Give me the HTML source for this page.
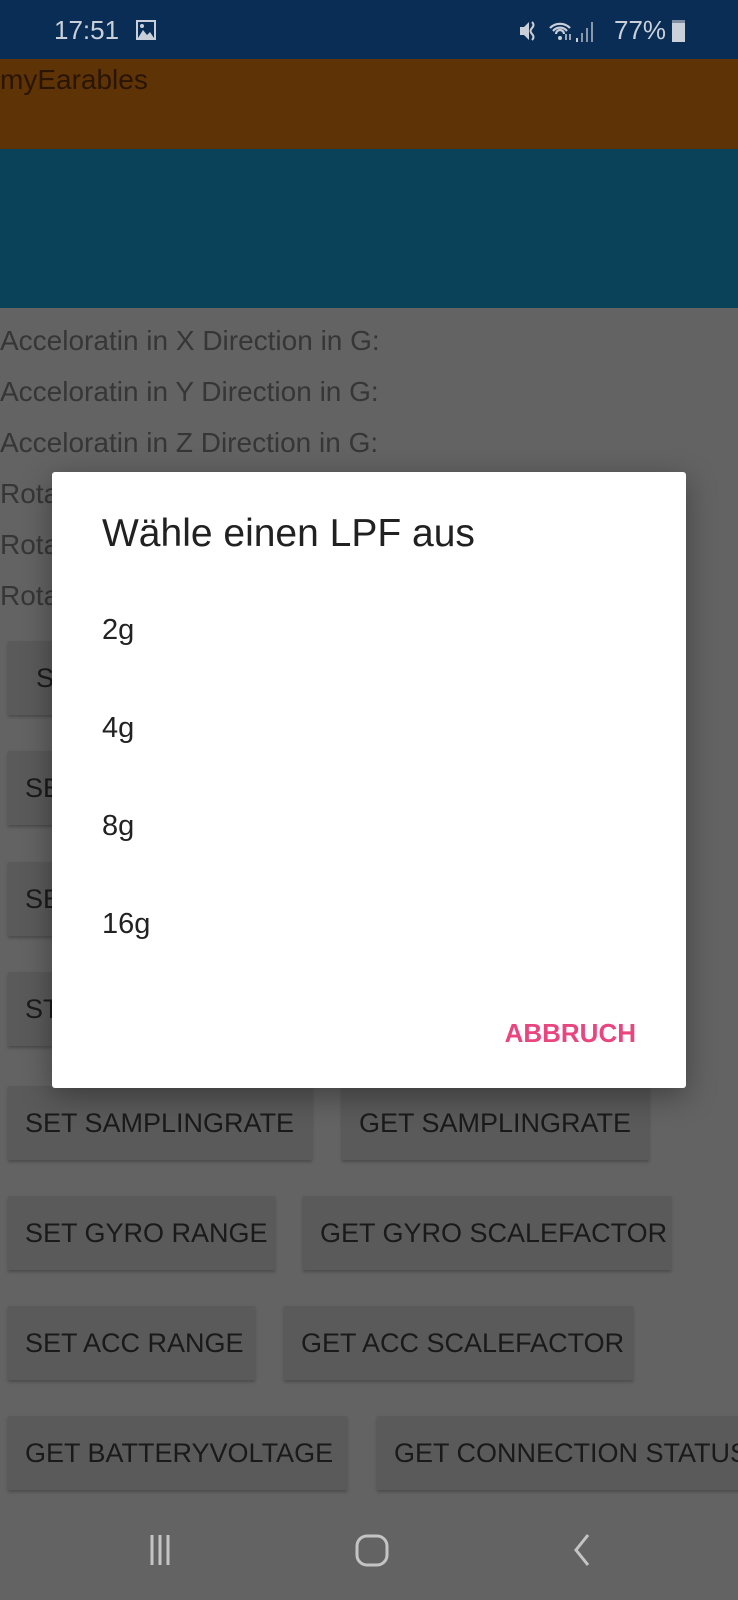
<!DOCTYPE html>
<html><head><meta charset="utf-8"><style>
*{margin:0;padding:0;box-sizing:border-box}
body{width:738px;height:1600px;overflow:hidden;background:#636363;font-family:"Liberation Sans",Roboto,sans-serif;position:relative}
.a{position:absolute}
.sb{left:0;top:0;width:738px;height:59px;background:#0a2d55;color:#c9d0da}
.t{font-size:25px;white-space:nowrap}
.lbl{left:0;color:#363636;font-size:28px}
.btn{position:absolute;height:74px;background:#5a5a5a;box-shadow:0 2px 3px rgba(0,0,0,.25);color:#1a1a1a;font-size:27px;line-height:74px;padding-left:17px;white-space:nowrap;overflow:hidden}
.dlg{left:52px;top:472px;width:634px;height:616px;background:#fff;border-radius:3px;box-shadow:0 8px 30px rgba(0,0,0,.35)}
.it{left:50px;font-size:29px;color:#222}
</style></head><body>
<div class="a sb">
  <div class="a t" style="left:54px;top:15px;font-size:26px">17:51</div>
  <svg class="a" style="left:135px;top:19px" width="22" height="22" viewBox="0 0 22 22"><rect x="1" y="1" width="20" height="20" fill="#c9d0da"/><rect x="3" y="3" width="16" height="16" fill="#0a2d55"/><path d="M3 19 L8 11 L12 16 L15 13 L19 19Z" fill="#c9d0da"/><circle cx="7" cy="7" r="2" fill="#c9d0da"/></svg>
  <svg class="a" style="left:518px;top:18px" width="150" height="26" viewBox="0 0 150 26">
    <path d="M2 9h4l5-5v18l-5-5H2z" fill="#c9d0da"/><path d="M14 4q3 3 0 6t0 6 0 6" stroke="#c9d0da" stroke-width="2" fill="none"/>
    <path d="M32 10a14 14 0 0 1 20 0M35 13a9 9 0 0 1 14 0M38 16a4 4 0 0 1 8 0" stroke="#c9d0da" stroke-width="2.2" fill="none"/><circle cx="42" cy="20" r="2" fill="#c9d0da"/><path d="M48 22v-6M52 16v6" stroke="#c9d0da" stroke-width="1.5"/>
    <rect x="58" y="20" width="2" height="4" fill="#c9d0da"/><rect x="63" y="15" width="2" height="9" fill="#8a97a8"/><rect x="68" y="10" width="2" height="14" fill="#8a97a8"/><rect x="73" y="4" width="2" height="20" fill="#8a97a8"/>
  </svg>
  <div class="a t" style="left:614px;top:15px;font-size:26px">77%</div>
  <div class="a" style="left:672px;top:20px;width:13px;height:22px;background:#c9d0da;border-top:3px solid #7f8ea3"></div>
</div>
<div class="a" style="left:0;top:59px;width:738px;height:90px;background:#5e3306"></div>
<div class="a t" style="left:0;top:64px;color:#2a1503;font-size:28px">myEarables</div>
<div class="a" style="left:0;top:149px;width:738px;height:159px;background:#0a4259"></div>
<div class="a t lbl" style="top:325px">Acceloratin in X Direction in G:</div>
<div class="a t lbl" style="top:376px">Acceloratin in Y Direction in G:</div>
<div class="a t lbl" style="top:427px">Acceloratin in Z Direction in G:</div>
<div class="a t lbl" style="top:478px">Rotation</div>
<div class="a t lbl" style="top:529px">Rotation</div>
<div class="a t lbl" style="top:580px">Rotation</div>
<div class="btn" style="left:8px;top:641px;width:300px;padding-left:28px">SET</div>
<div class="btn" style="left:8px;top:751px;width:300px">SET</div>
<div class="btn" style="left:8px;top:862px;width:300px">SET</div>
<div class="btn" style="left:8px;top:972px;width:300px">STA</div>
<div class="btn" style="left:8px;top:1086px;width:304px">SET SAMPLINGRATE</div>
<div class="btn" style="left:342px;top:1086px;width:307px">GET SAMPLINGRATE</div>
<div class="btn" style="left:8px;top:1196px;width:267px">SET GYRO RANGE</div>
<div class="btn" style="left:303px;top:1196px;width:368px">GET GYRO SCALEFACTOR</div>
<div class="btn" style="left:8px;top:1306px;width:247px">SET ACC RANGE</div>
<div class="btn" style="left:284px;top:1306px;width:349px">GET ACC SCALEFACTOR</div>
<div class="btn" style="left:8px;top:1416px;width:339px">GET BATTERYVOLTAGE</div>
<div class="btn" style="left:377px;top:1416px;width:400px">GET CONNECTION STATUS</div>
<div class="a dlg">
  <div class="a t" style="left:50px;top:40px;font-size:39px;color:#212121">Wähle einen LPF aus</div>
  <div class="a t it" style="top:142px">2g</div>
  <div class="a t it" style="top:240px">4g</div>
  <div class="a t it" style="top:338px">8g</div>
  <div class="a t it" style="top:436px">16g</div>
  <div class="a t" style="right:50px;top:546px;font-size:26px;font-weight:bold;color:#e9457e">ABBRUCH</div>
</div>
<svg class="a" style="left:0;top:1530px" width="738" height="40" viewBox="0 0 738 40">
  <path d="M152 5v30M160 5v30M168 5v30" stroke="#c4c4c4" stroke-width="3"/>
  <rect x="357" y="6" width="30" height="29" rx="10" stroke="#c4c4c4" stroke-width="3" fill="none"/>
  <path d="M588 5L576 20L588 35" stroke="#c4c4c4" stroke-width="3" fill="none"/>
</svg>
</body></html>
